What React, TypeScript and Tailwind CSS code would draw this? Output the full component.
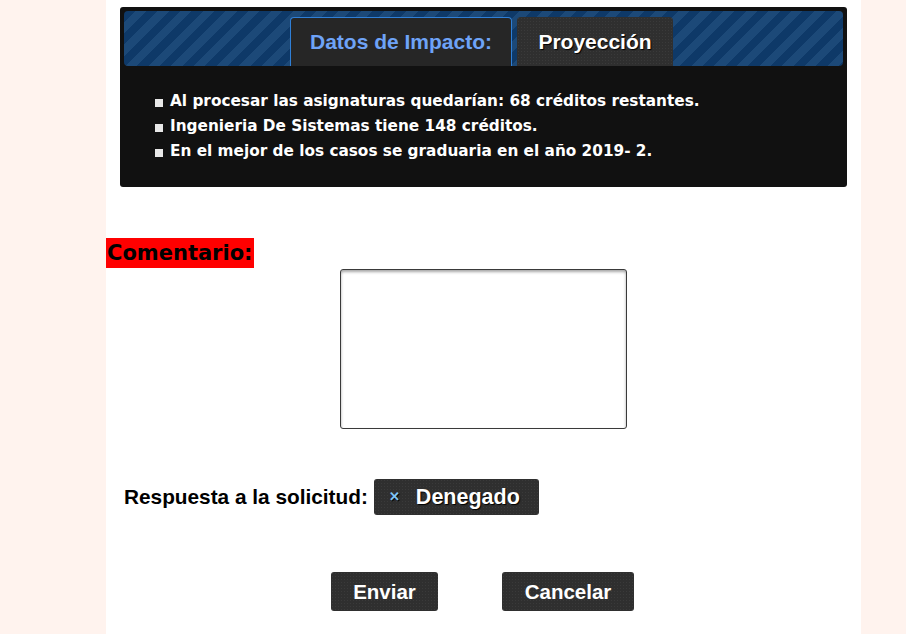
import React, { useState } from 'react';

const stripes =
  'bg-[repeating-linear-gradient(135deg,#0e3968_0px,#0e3968_8px,#1c4978_8px,#1c4978_16px)]';
const dotted =
  'bg-[#2f2f2f] bg-[radial-gradient(#3a3a3a_1px,transparent_1px)] bg-[length:3px_3px]';

const impacto = [
  'Al procesar las asignaturas quedarían: 68 créditos restantes.',
  'Ingenieria De Sistemas tiene 148 créditos.',
  'En el mejor de los casos se graduaria en el año 2019- 2.',
];

const App: React.FC = () => {
  const [tab, setTab] = useState<'impacto' | 'proyeccion'>('impacto');
  const [comentario, setComentario] = useState('');

  return (
    <div className="min-h-[634px] bg-[#fff3ee] flex">
      <div className="w-[755px] ml-[106px] bg-white min-h-[634px] flex flex-col">
        {/* Panel de impacto */}
        <div className="mt-[7px] mx-[14px] bg-[#111111] rounded-[3px] p-[4px] pb-0 h-[180px] flex flex-col">
          <div className={`${stripes} rounded-[4px] h-[55px] flex justify-center items-end gap-[5px] pt-[6px] pr-[4px]`}>
            <button
              onClick={() => setTab('impacto')}
              className={`h-[49px] w-[222px] rounded-t-[4px] border border-b-0 border-[#2f7fd6] bg-[#262626] text-[21px] font-bold text-[#6ea3f7] font-['Liberation_Sans',Arial,sans-serif]`}
            >
              Datos de Impacto:
            </button>
            <button
              onClick={() => setTab('proyeccion')}
              className={`h-[49px] w-[156px] rounded-t-[4px] ${dotted} text-[21px] font-bold text-white font-['Liberation_Sans',Arial,sans-serif] [text-shadow:1px_1px_1px_#000]`}
            >
              Proyección
            </button>
          </div>
          <ul className="pl-[31px] pt-[23px] font-['DejaVu_Sans',Verdana,sans-serif] font-bold text-[15.3px] leading-[25px] text-white">
            {(tab === 'impacto' ? impacto : impacto).map((t) => (
              <li key={t} className="flex items-center">
                <span className="inline-block w-[8px] h-[8px] bg-[#e8e8e8] mr-[7px] mt-[2px]" />
                {t}
              </li>
            ))}
          </ul>
        </div>

        {/* Comentario */}
        <div className="mt-[51px]">
          <span className="inline-block bg-[#ff0000] text-black font-['DejaVu_Sans',Verdana,sans-serif] font-bold text-[21px] leading-[30px] pl-[1px] pr-[1px]">
            Comentario:
          </span>
        </div>
        <div className="flex justify-center mt-[1px]">
          <textarea
            value={comentario}
            onChange={(e) => setComentario(e.target.value)}
            className="w-[287px] h-[160px] border border-[#3a3a3a] rounded-[3px] bg-white shadow-[inset_0_2px_3px_rgba(0,0,0,0.35)] resize-none outline-none p-1"
          />
        </div>

        {/* Respuesta */}
        <div className="mt-[50px] ml-[18px] flex items-center gap-[6px] font-['Liberation_Sans',Arial,sans-serif] font-bold">
          <span className="text-[20.8px] text-black">Respuesta a la solicitud:</span>
          <span className={`${dotted} h-[36px] w-[165px] rounded-[3px] flex items-center pl-[15px] gap-[16px] text-white text-[21.5px] [text-shadow:1px_1px_1px_#000]`}>
            <span className="text-[#7fc4f5] text-[13px]">✕</span>
            Denegado
          </span>
        </div>

        {/* Botones */}
        <div className="mt-[57px] flex justify-center gap-[64px] pr-[2px] font-['Liberation_Sans',Arial,sans-serif] font-bold text-[20.5px] text-white [text-shadow:1px_1px_1px_#000]">
          <button className={`${dotted} w-[107px] h-[39px] rounded-[3px] pt-[2px]`}>Enviar</button>
          <button className={`${dotted} w-[132px] h-[39px] rounded-[3px] pt-[2px]`}>Cancelar</button>
        </div>
      </div>
    </div>
  );
};

export default App;
